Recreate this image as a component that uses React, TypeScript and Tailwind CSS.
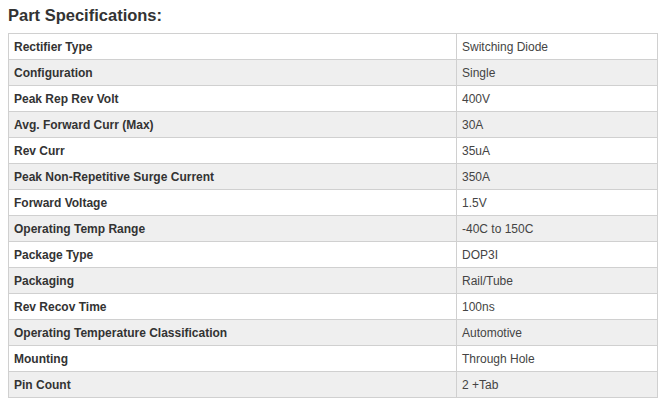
const SPECS: [string, string][] = [
  ["Rectifier Type", "Switching Diode"],
  ["Configuration", "Single"],
  ["Peak Rep Rev Volt", "400V"],
  ["Avg. Forward Curr (Max)", "30A"],
  ["Rev Curr", "35uA"],
  ["Peak Non-Repetitive Surge Current", "350A"],
  ["Forward Voltage", "1.5V"],
  ["Operating Temp Range", "-40C to 150C"],
  ["Package Type", "DOP3I"],
  ["Packaging", "Rail/Tube"],
  ["Rev Recov Time", "100ns"],
  ["Operating Temperature Classification", "Automotive"],
  ["Mounting", "Through Hole"],
  ["Pin Count", "2 +Tab"],
];

export default function App() {
  return (
    <div className="h-[405px] w-[670px] bg-white px-2 pt-[6px] font-['Liberation_Sans',Arial,sans-serif]">
      <h2 className="mb-[8px] text-[16.5px] font-bold leading-[19px] text-[#333333]">
        Part Specifications:
      </h2>
      <table className="w-[650px] border-collapse border border-[#d0d0d0] text-[12px] leading-[14px]">
        <tbody>
          {SPECS.map(([label, value], i) => (
            <tr key={label} className={i % 2 === 1 ? "bg-[#efefef]" : "bg-white"}>
              <td className="h-[26px] w-[448px] border border-[#d0d0d0] px-[5px] font-bold text-[#333333]">
                {label}
              </td>
              <td className="h-[26px] border border-[#d0d0d0] px-[5px] text-[#444444]">{value}</td>
            </tr>
          ))}
        </tbody>
      </table>
    </div>
  );
}
